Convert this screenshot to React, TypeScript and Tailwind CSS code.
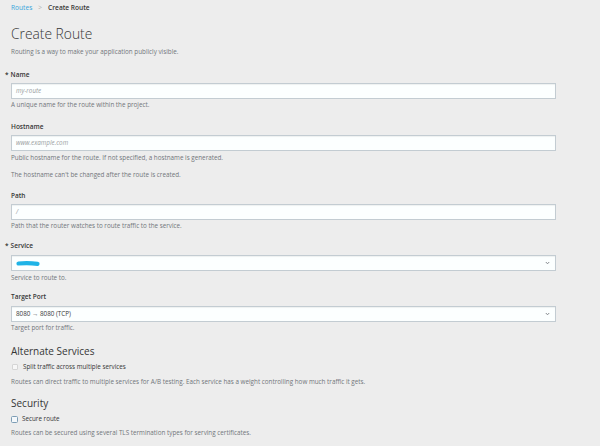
import React from "react";

const help = "text-[6.3px] leading-[10px] text-[#72767b]";
const label = "text-[6.5px] leading-[10px] font-semibold text-[#363636]";
const input =
  "h-[16px] w-full border border-[#c3ccd2] bg-[#fcffff] px-[4px] flex items-center text-[6.3px] shadow-[inset_0_1px_1px_rgba(0,0,0,0.06)]";

const Chevron = () => (
  <svg width="5" height="4" viewBox="0 0 5 4" className="ml-auto mr-[1px]">
    <path d="M0.8 1 L2.5 2.8 L4.2 1" fill="none" stroke="#7a7e83" strokeWidth="0.9" />
  </svg>
);

const Req = () => (
  <span className="-ml-[6px] mr-[2px] text-[#363636]">*</span>
);

export default function App() {
  return (
    <div
      className="w-[600px] h-[446px] overflow-hidden bg-[#ededed] text-[#363636]"
      style={{ fontFamily: '"Open Sans", "Liberation Sans", sans-serif' }}
    >
      <div className="pl-[11px] w-[556px]">
        {/* breadcrumb */}
        <div className="pt-[3px] flex items-center text-[6.6px] leading-[10px]">
          <span className="text-[#39a5dc]">Routes</span>
          <span className="mx-[6px] text-[#b0b0b0]">&gt;</span>
          <span className="font-semibold text-[#363636]">Create Route</span>
        </div>

        <h1 className="mt-[11px] text-[13.8px] leading-[20px] font-light text-[#363636]">
          Create Route
        </h1>
        <p className={`${help} mt-[3px]`}>
          Routing is a way to make your application publicly visible.
        </p>

        {/* Name */}
        <div className={`${label} mt-[13px]`}>
          <Req />
          Name
        </div>
        <div className={`${input} mt-[3px]`}>
          <span className="italic text-[#9a9da0]">my-route</span>
        </div>
        <p className={`${help} mt-[1px]`}>A unique name for the route within the project.</p>

        {/* Hostname */}
        <div className={`${label} mt-[12px]`}>Hostname</div>
        <div className={`${input} mt-[3px]`}>
          <span className="italic text-[#9a9da0]">www.example.com</span>
        </div>
        <p className={`${help} mt-[2px]`}>
          Public hostname for the route. If not specified, a hostname is generated.
        </p>
        <p className={`${help} mt-[7px]`}>
          The hostname can't be changed after the route is created.
        </p>

        {/* Path */}
        <div className={`${label} mt-[11px]`}>Path</div>
        <div className={`${input} mt-[3px]`}>
          <span className="italic text-[#9a9da0]">/</span>
        </div>
        <p className={`${help} mt-[1px]`}>Path that the router watches to route traffic to the service.</p>

        {/* Service */}
        <div className={`${label} mt-[10px]`}>
          <Req />
          Service
        </div>
        <div className={`${input} mt-[4px]`}>
          <svg width="24" height="7" viewBox="0 0 24 7">
            <path d="M2.5 3.5 C8 3 15 3 21.5 3.8" fill="none" stroke="#1fb3e6" strokeWidth="4.2" strokeLinecap="round" />
          </svg>
          <Chevron />
        </div>
        <p className={`${help} mt-[2px]`}>Service to route to.</p>

        {/* Target Port */}
        <div className={`${label} mt-[9px]`}>Target Port</div>
        <div className={`${input} mt-[4px]`}>
          <span className="text-[#363636]">8080 → 8080 (TCP)</span>
          <Chevron />
        </div>
        <p className={`${help} mt-[1px]`}>Target port for traffic.</p>

        {/* Alternate Services */}
        <h2 className="mt-[11px] text-[10px] leading-[14px] text-[#363636]">Alternate Services</h2>
        <label className="mt-[4px] flex items-center gap-[5px] text-[6.3px] leading-[10px] text-[#363636]">
          <span className="ml-[1px] h-[6px] w-[6px] rounded-[1px] border border-[#d5d5d5] bg-[#f7f7f7]" />
          Split traffic across multiple services
        </label>
        <p className={`${help} mt-[5px]`}>
          Routes can direct traffic to multiple services for A/B testing. Each service has a weight controlling how much traffic it gets.
        </p>

        {/* Security */}
        <h2 className="mt-[9px] text-[10px] leading-[14px] text-[#363636]">Security</h2>
        <label className="mt-[4px] flex items-center gap-[4px] text-[6.3px] leading-[10px] text-[#363636]">
          <span className="h-[7px] w-[7px] rounded-[1.5px] border border-[#7d9db5] bg-[#f4f8fb]" />
          Secure route
        </label>
        <p className={`${help} mt-[4px]`}>
          Routes can be secured using several TLS termination types for serving certificates.
        </p>
      </div>
    </div>
  );
}
